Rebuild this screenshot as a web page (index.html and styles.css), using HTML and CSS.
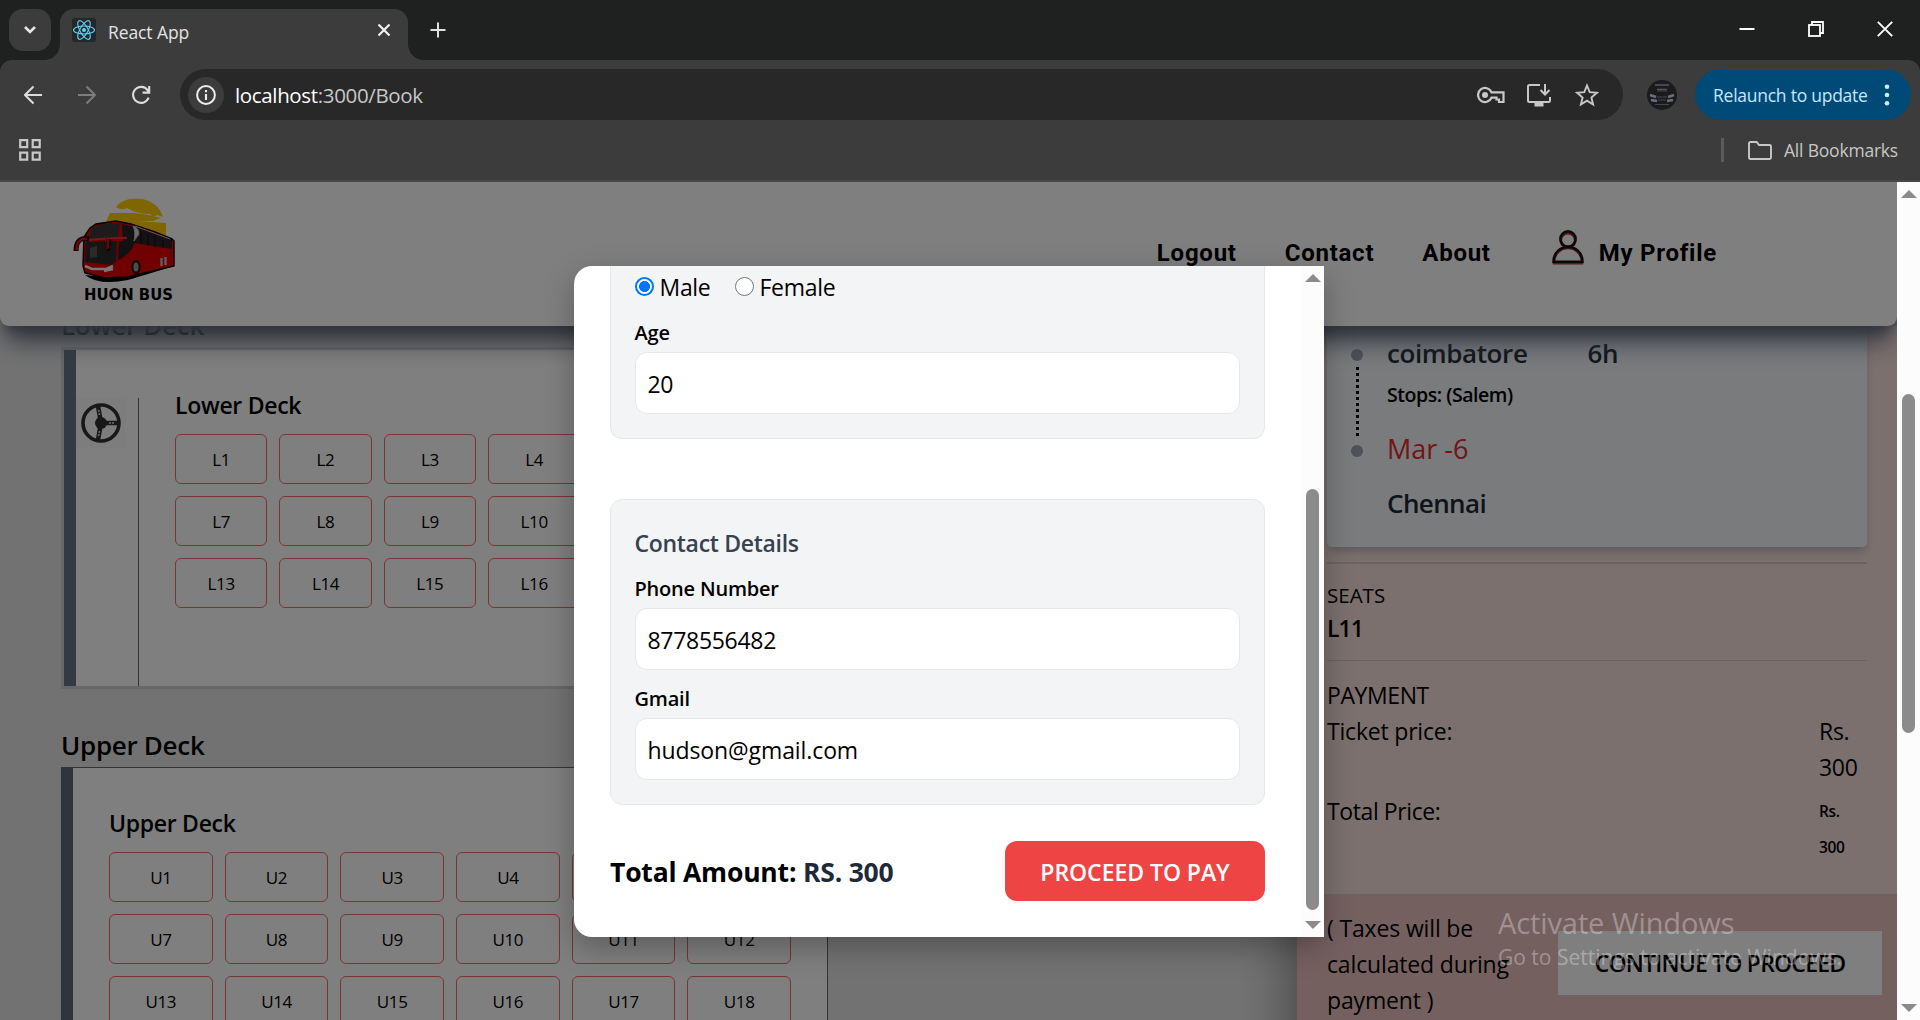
FILE: index.html
```html
<!DOCTYPE html>
<html lang="en">
<head>
<meta charset="utf-8">
<title>React App</title>
<link rel="stylesheet" href="styles.css">
</head>
<body>
<div class="tabstrip">
  <div class="tab-menu"><svg width="14" height="10" viewBox="0 0 14 10"><path d="M2 2l5 5 5-5" fill="none" stroke="#e6e6e6" stroke-width="2.6"/></svg></div>
  <div class="tab">
    <svg class="favicon" width="24" height="24" viewBox="0 0 24 24"><rect width="24" height="24" rx="3" fill="#23272b"/><g fill="none" stroke="#5fd3f3" stroke-width="1.1"><ellipse cx="12" cy="12" rx="10.5" ry="4"/><ellipse cx="12" cy="12" rx="10.5" ry="4" transform="rotate(60 12 12)"/><ellipse cx="12" cy="12" rx="10.5" ry="4" transform="rotate(120 12 12)"/></g><circle cx="12" cy="12" r="2" fill="#5fd3f3"/></svg>
    <span class="tab-title">React App</span>
    <svg width="14" height="14" viewBox="0 0 14 14"><path d="M1.5 1.5l11 11M12.5 1.5l-11 11" stroke="#f0f0f0" stroke-width="2.2"/></svg>
  </div>
  <svg class="new-tab" width="16" height="16" viewBox="0 0 16 16"><path d="M8 .5v15M.5 8h15" stroke="#e0e0e0" stroke-width="2"/></svg>
  <div class="window-buttons">
    <svg width="16" height="16" viewBox="0 0 16 16"><path d="M.5 8h15" stroke="#fff" stroke-width="2"/></svg>
    <svg width="16" height="16" viewBox="0 0 16 16" fill="none" stroke="#fff" stroke-width="1.8"><rect x="1" y="4" width="11" height="11"/><path d="M4 4V1h11v11h-3"/></svg>
    <svg width="16" height="16" viewBox="0 0 16 16"><path d="M.8.8l14.4 14.4M15.2.8L.8 15.2" stroke="#fff" stroke-width="1.9"/></svg>
  </div>
</div>
<div class="toolbar">
  <div class="nav-row">
    <svg class="back" width="20" height="20" viewBox="0 0 20 20" fill="none" stroke="#dcdcdc" stroke-width="2"><path d="M18 10H2M9.5 1.5L1 10l8.5 8.5"/></svg>
    <svg class="forward" width="20" height="20" viewBox="0 0 20 20" fill="none" stroke="#7d7d7d" stroke-width="2"><path d="M1 10h16M9.5 1.5L18 10l-8.5 8.5"/></svg>
    <svg class="reload" width="20" height="20" viewBox="0 0 20 20" fill="none" stroke="#dcdcdc" stroke-width="2.1"><path d="M17.6 12.6a8 8 0 1 1-1-7.4L18 7M18.2 1v6.6h-6.6"/></svg>
    <div class="omnibox">
      <div class="site-info"><svg width="20" height="20" viewBox="0 0 20 20"><circle cx="10" cy="10" r="8.9" fill="none" stroke="#ececec" stroke-width="2"/><path d="M10 9v6M10 5v2.2" stroke="#ececec" stroke-width="2.1"/></svg></div>
      <span class="url">localhost<i>:3000/Book</i></span>
      <svg width="28" height="18" viewBox="0 0 28 18" fill="none" stroke="#c8c8c8" stroke-width="2.200"><path d="M14.500 6.300A7 7 0 1 0 14.500 11.700H19.500V13.500H22V16H26.500V6.300z"/><circle cx="8" cy="9" r="3" fill="#c8c8c8" stroke="none"/></svg>
      <svg class="install" width="26" height="24" viewBox="0 0 26 24" fill="none" stroke="#c8c8c8" stroke-width="2"><path d="M14 2H3.500Q2 2 2 3.500v14Q2 19 3.500 19h19q1.500 0 1.500-1.500V14M19 1v10M14.500 7l4.500 4.500L23.500 7"/><path d="M8.500 21.500h9" stroke-width="4"/></svg>
      <svg width="24" height="24" viewBox="0 0 24 24" fill="none" stroke="#c8c8c8" stroke-width="1.900"><path d="M12 2.500l2.700 6.700 7.200.6-5.500 4.700 1.700 7-6.100-3.800-6.100 3.800 1.700-7L2.100 9.800l7.200-.6z"/></svg>
    </div>
    <svg class="avatar" width="30" height="30" viewBox="0 0 30 30"><circle cx="15" cy="15" r="15" fill="#1b1b1d"/><path d="M8 5h14M10 9.500h10" stroke="#55585e" stroke-width="1.500"/><path d="M3 15l6 2M27 15l-6 2M4 20l6 1M26 20l-6 1" stroke="#69707c" stroke-width="2.500"/><path d="M10 11h10M10 17h10M11 20h8M8 24.500h14" stroke="#44474c" stroke-width="1.200"/></svg>
    <div class="relaunch">Relaunch to update<svg width="6" height="22" viewBox="0 0 6 22" fill="#cdeaff"><circle cx="3" cy="2.700" r="2.300"/><circle cx="3" cy="11" r="2.300"/><circle cx="3" cy="19.300" r="2.300"/></svg></div>
  </div>
  <div class="bookmark-row">
    <svg width="22" height="22" viewBox="0 0 22 22" fill="none" stroke="#c8c8c8" stroke-width="2.200"><path d="M1.200 1.200h7v7h-7zM13.700 1.200h7v7h-7zM1.200 13.700h7v7h-7zM13.700 13.700h7v7h-7z"/></svg>
    <div class="all-bookmarks"><b></b><svg width="24" height="19" viewBox="0 0 24 19" fill="none" stroke="#c8c8c8" stroke-width="1.900"><path d="M1 2.500Q1 1 2.500 1h6.200L11 4h10.500Q23 4 23 5.500v11q0 1.500-1.500 1.500h-19Q1 18 1 16.500z"/></svg><span>All Bookmarks</span></div>
  </div>
</div>
<div class="window">
  <div class="page">
    <header class="site-header">
      <svg class="logo" width="104" height="108" viewBox="0 0 104 108">
        <path d="M43 11C52-2 84-1 90 21L84 19Q80 22 77 18Q64 18 54 12Q49 15 43 11M37 17H61Q74 18 88 22L80 25H65L93 27V42H56L33 26z" fill="#ffcc00"/>
        <path d="M12 79L40 82 101 68 98 71 55 84Q26 90 12 79z" fill="#000"/>
        <path d="M11 41L17 32 23 28 43 25 58 28 82 36 99 43 101 45V70L54 81 32 82 12 77 10 70z" fill="#e00005" stroke="#140000" stroke-width="1.500"/>
        <path d="M20 31Q24 28 47 27L45 42 15 43z" fill="#393939"/>
        <path d="M13 46L44 45 43 65 39 69 12 66z" fill="#2b2b2b"/>
        <path d="M49 28L61 31 63 45Q56 60 45 64L46 45H50z" fill="#222"/>
        <path d="M60 30L99 44V53L61 47z" fill="#302226"/>
        <path d="M60 30Q66 32 66 38L61 45Q63 36 60 30M62 30L97 43" fill="#ddd" stroke="#bbb" stroke-width="1"/>
        <path d="M68 35v13M75 38v12M82 40v11M90 43v9" stroke="#111" stroke-width="1"/>
        <path d="M13 44L43 42H54" stroke="#ee3030" stroke-width="2"/>
        <path d="M16 43Q3 40 3 55M36 43Q35 53 34 54" fill="none" stroke="#1b0000" stroke-width="5"/>
        <path d="M14 43Q4 41 3.500 54M35 43Q35 50 34 53" fill="none" stroke="#cc1010" stroke-width="2.600"/>
        <path d="M12 70L19 73H33L40 70M31 75l9-2" fill="none" stroke="#eee" stroke-width="2.500"/>
        <path d="M17 52L24 50V61L17 62z" fill="#555"/>
        <ellipse cx="63" cy="71" rx="4.600" ry="7" fill="#181818"/><ellipse cx="63" cy="71" rx="2.500" ry="4.500" fill="#999"/>
        <path d="M88.500 62v8M92.500 61v8" stroke="#bbb" stroke-width="2.400"/>
        <text x="11" y="103.500" class="logo-text" textLength="89" lengthAdjust="spacingAndGlyphs">HUON BUS</text>
      </svg>
      <nav class="site-nav">
        <span class="n1">Logout</span><span class="n2">Contact</span><span class="n3">About</span>
        <svg width="32" height="35" viewBox="0 0 32 35" fill="none"><g stroke="#b83036" stroke-width="2.500"><circle cx="16" cy="10.500" r="7.200"/><path d="M2 33.300C2 13 30 13 30 33.300z"/></g><g stroke="#151515" stroke-width="2.600"><circle cx="16" cy="9" r="7.600"/><path d="M1.500 31.700C2 12 30 12 30.500 31.700z"/></g></svg>
        <span class="n4">My Profile</span>
      </nav>
    </header>
    <div class="columns">
      <main class="decks">
        <h2 class="deck-title first">Lower Deck</h2>
        <section class="deck lower">
          <div class="driver"><svg width="50" height="50" viewBox="0 0 50 50"><rect width="50" height="50" fill="#fafafa"/><circle cx="25" cy="25" r="18" fill="none" stroke="#303030" stroke-width="3.600"/><circle cx="25" cy="25" r="6" fill="#303030"/><path d="M25 25L22 8M25 25L22 42M25 25H42" stroke="#303030" stroke-width="4.500"/><path d="M23.500 17l-1-6M23.500 33l-1 6M33 25h6" stroke="#ddd" stroke-width="1.500" stroke-dasharray="2 1"/></svg></div>
          <div class="deck-body">
            <h3>Lower Deck</h3>
            <div class="seats"><span>L1</span><span>L2</span><span>L3</span><span>L4</span><span>L5</span><span>L6</span><span>L7</span><span>L8</span><span>L9</span><span>L10</span><span>L11</span><span>L12</span><span>L13</span><span>L14</span><span>L15</span><span>L16</span><span>L17</span><span>L18</span></div>
          </div>
        </section>
        <h2 class="deck-title">Upper Deck</h2>
        <section class="deck upper">
          <div class="deck-body">
            <h3>Upper Deck</h3>
            <div class="seats"><span>U1</span><span>U2</span><span>U3</span><span>U4</span><span>U5</span><span>U6</span><span>U7</span><span>U8</span><span>U9</span><span>U10</span><span>U11</span><span>U12</span><span>U13</span><span>U14</span><span>U15</span><span>U16</span><span>U17</span><span>U18</span></div>
          </div>
        </section>
      </main>
      <aside class="summary">
        <div class="trip">
          <div class="timeline"><i></i><b></b><i></i></div>
          <div class="stops">
            <p class="city"><span>coimbatore</span><span>6h</span></p>
            <p class="via">Stops: (Salem)</p>
            <p class="date">Mar -6</p>
            <p class="city dest">Chennai</p>
          </div>
        </div>
        <div class="seat-info"><p class="label">SEATS</p><p class="seat-no">L11</p></div>
        <div class="payment">
          <p class="pay-title">PAYMENT</p>
          <div class="pay-row"><span class="tp">Ticket price:</span><span class="amount">Rs.<br>300</span></div>
          <div class="pay-row total"><span>Total Price:</span><span class="amount small">Rs.<br>300</span></div>
        </div>
        <div class="checkout"><p>( Taxes will be<br>calculated during<br>payment )</p><button>CONTINUE TO PROCEED</button></div>
      </aside>
    </div>
    <div class="overlay"></div>
    <div class="modal">
      <div class="modal-content">
        <div class="card passenger">
          <div class="genders"><i class="radio on"></i><span class="male">Male</span><i class="radio"></i><span class="female">Female</span></div>
          <label>Age</label>
          <div class="field">20</div>
        </div>
        <div class="card contact">
          <h3>Contact Details</h3>
          <label class="phone">Phone Number</label>
          <div class="field">8778556482</div>
          <label>Gmail</label>
          <div class="field mail">hudson@gmail.com</div>
        </div>
        <div class="pay-bar"><strong>Total Amount: <em>RS. 300</em></strong><button>PROCEED TO PAY</button></div>
      </div>
      <div class="scroll modal-scroll"><i class="up"></i><b></b><i class="down"></i></div>
    </div>
    <div class="watermark"><p>Activate Windows</p><small>Go to Settings to activate Windows.</small></div>
  </div>
  <div class="scroll page-scroll"><i class="up"></i><b></b><i class="down"></i></div>
</div>
</body>
</html>
```
FILE: styles.css
```css
* { box-sizing: border-box; margin: 0; padding: 0; }
body { width: 1920px; height: 1020px; overflow: hidden; display: flex; flex-direction: column; font-family: "Open Sans", "Noto Sans", sans-serif; font-size: 23px; line-height: 36px; letter-spacing: -0.3px; color: #000; background: #1f2120; }
svg { display: block; flex: none; }
i, em { font-style: normal; }
button { border: 0; font: inherit; letter-spacing: inherit; }
span, p, h2, h3, label, strong, small { white-space: nowrap; }

/* Browser frame */
.tabstrip { height: 60px; display: flex; background: #1f2120; padding-left: 9px; }
.tab-menu { width: 42px; height: 42px; margin-top: 9px; border-radius: 14px; background: #3c3c3c; display: flex; align-items: center; justify-content: center; }
.tab { position: relative; width: 348px; height: 51px; margin: 9px 0 0 9px; padding: 0 17px 9px 12px; border-radius: 14px 14px 0 0; background: #3c3c3c; display: flex; align-items: center; }
.tab::before, .tab::after { content: ""; position: absolute; bottom: 0; width: 15px; height: 15px; }
.tab::before { left: -15px; background: radial-gradient(circle at 0 0, transparent 14.5px, #3c3c3c 15px); }
.tab::after { right: -15px; background: radial-gradient(circle at 100% 0, transparent 14.5px, #3c3c3c 15px); }
.tab-title { flex: 1; margin-left: 12px; padding-top: 3px; font-size: 17.5px; color: #e3e3e3; letter-spacing: -.1px; }
.new-tab { margin: 22px 0 0 22px; }
.window-buttons { margin: 21px 27px 0 auto; display: flex; gap: 53px; }
.toolbar { height: 122px; background: #3c3c3c; border-bottom: 2px solid #474747; border-radius: 12px 12px 0 0; }
.nav-row { height: 69px; padding: 0 9px 0 24px; display: flex; align-items: center; }
.forward { margin-left: 33px; }
.reload { margin-left: 34px; }
.omnibox { width: 1443px; height: 51px; margin-left: 29px; padding: 0 24px 0 8px; border-radius: 26px; background: #282828; display: flex; align-items: center; }
.site-info { width: 36px; height: 36px; border-radius: 50%; background: #3c3c3c; display: flex; align-items: center; justify-content: center; }
.url { flex: 1; margin-left: 11px; font-size: 20.5px; color: #fff; letter-spacing: -.35px; }
.url i { color: #c7c7c7; }
.install { margin: 0 23px 0 21px; }
.avatar { margin-left: 24px; }
.relaunch { width: 216px; height: 51px; margin-left: 18px; padding: 0 21px 0 18px; border-radius: 26px; background: #004a77; color: #c2e7ff; font-size: 17.5px; letter-spacing: -.25px; display: flex; align-items: center; justify-content: space-between; }
.bookmark-row { height: 42px; padding: 0 22px 0 19px; display: flex; justify-content: space-between; align-items: center; }
.all-bookmarks { display: flex; align-items: center; font-size: 17.5px; color: #c7c7c7; letter-spacing: -.2px; }
.all-bookmarks b { width: 3px; height: 24px; background: #5c5c5c; margin-right: 24px; }
.all-bookmarks span { margin-left: 12px; }

/* Page frame */
.window { height: 838px; display: flex; }
.page { position: relative; width: 1897px; height: 838px; overflow: hidden; background: #e5e5e5; }
.scroll { width: 23px; background: #fcfcfc; display: flex; flex-direction: column; align-items: center; padding: 8px 0; }
.scroll .up { border: 8px solid transparent; border-top: 0; border-bottom-color: #8b8b8b; }
.scroll .down { border: 8px solid transparent; border-bottom: 0; border-top-color: #8b8b8b; margin-top: auto; }
.scroll b { width: 13px; border-radius: 7px; background: #8b8b8b; }
.page-scroll b { height: 339px; margin-top: 196px; }
.modal-scroll b { height: 421px; margin-top: 207px; }

/* Site header */
.site-header { position: relative; z-index: 2; height: 144px; background: #fff; border-radius: 0 0 9px 9px; box-shadow: 0 22px 26px -7px #606878, 0 9px 14px -6px #606878; display: flex; justify-content: space-between; padding: 14px 180px 0 73px; }
.logo-text { font: 700 15px "DejaVu Sans", sans-serif; letter-spacing: 0; }
.site-nav { display: flex; margin-top: 39px; font: 700 24px/36px Roboto, sans-serif; letter-spacing: .75px; }
.site-nav svg { margin: -5px 15px 0 61px; }
.n1, .n2 { margin-right: 48px; }
.columns { display: grid; grid-template-columns: 1297px 600px; height: 694px; }

/* Decks */
.decks { padding-left: 61px; }
.deck-title { font-size: 26px; font-weight: 600; }
.deck-title.first { margin-top: -19px; }
.deck { width: 767px; display: flex; }
.deck h3 { font-size: 23px; font-weight: 600; }
.lower { height: 342px; margin: 4px 0 38px; border: 3px solid #ccced3; background: linear-gradient(90deg, #6b7585 12px, #fff 12px); }
.driver { width: 63px; margin: 48px 0 0 12px; border-right: 1px solid #606468; }
.deck-body { flex: 1; padding: 38px 36px 0; }
.lower .deck-body { padding: 37px 36px 0 36px; }
.upper h3 { line-height: 35px; height: 36px; }
.seats { display: grid; grid-template-columns: repeat(6, 1fr); gap: 12px; margin-top: 10px; font-size: 17px; letter-spacing: -.4px; }
.lower .seats { margin-top: 11px; }
.seats span { height: 50px; border: 1px solid #ef6b6b; border-radius: 6px; line-height: 49px; text-align: center; }
.upper { height: 420px; margin-top: 4px; border: solid #606b78; border-width: 1px 1px 0 12px; background: #fff; }

/* Booking summary */
.summary { background: #f6e1dd; box-shadow: 0 0 50px 6px rgba(0,0,0,.4); }
.trip { height: 221px; margin: 0 30px 15px; padding: 9px 0 0 24px; background: #f3f6f9; border-radius: 0 0 5px 5px; box-shadow: 0 6px 10px -2px rgba(80,90,110,.35); display: flex; }
.timeline { width: 12px; margin-right: 24px; padding-top: 14px; display: flex; flex-direction: column; align-items: center; gap: 6px; }
.timeline i { width: 12px; height: 12px; border-radius: 50%; background: #9ca3af; }
.timeline b { width: 3px; height: 72px; background: repeating-linear-gradient(#000 0 3px, transparent 3px 6px); }
.city { font-size: 26px; font-weight: 600; letter-spacing: -.4px; color: #1f2937; display: flex; gap: 60px; }
.via { margin-top: 9px; font-size: 19.500px; font-weight: 600; line-height: 30px; letter-spacing: -.45px; }
.date { margin-top: 21px; font-size: 27px; letter-spacing: 0; color: #e32a2e; }
.dest { margin-top: 18px; letter-spacing: -.6px; }
.seat-info { height: 99px; margin: 0 30px; padding-top: 16px; border-top: 2px solid #dfc2bf; border-bottom: 1px solid #dfc6c2; }
.label { font-size: 20.500px; line-height: 30px; font-weight: 500; letter-spacing: 0; }
.seat-no { font-weight: 600; letter-spacing: -1px; }
.payment { height: 233px; padding: 16px 0 0 30px; }
.pay-title { letter-spacing: -.4px; }
.pay-row { height: 80px; display: flex; justify-content: space-between; }
.tp { letter-spacing: -.2px; }
.total { letter-spacing: -.4px; }
.amount { width: 78px; }
.small { font-size: 15.500px; font-weight: 600; }
.checkout { height: 126px; padding: 16px 15px 0 30px; background: #ebc0c0; display: flex; justify-content: space-between; letter-spacing: -.15px; }
.checkout button { width: 324px; height: 64px; margin-top: 21px; background: #fff; font-weight: 600; letter-spacing: -.8px; }

/* Passenger dialog */
.overlay { position: absolute; inset: 0; z-index: 3; background: rgba(0,0,0,.5); }
.modal { position: absolute; z-index: 4; left: 574px; top: 84px; width: 750px; height: 671px; border-radius: 18px 0 0 18px; background: #fff; box-shadow: 0 10px 30px rgba(0,0,0,.28); display: flex; overflow: hidden; }
.modal-content { flex: 1; padding: 0 36px; }
.card { background: #f3f4f6; border: 1px solid #e5e7eb; border-radius: 12px; padding: 25px 24px 24px 23.500px; }
.passenger { height: 173px; padding-top: 3px; border-top: 0; border-radius: 0 0 12px 12px; }
.genders { display: flex; align-items: center; height: 36px; margin-bottom: 12px; }
.radio { width: 19px; height: 19px; margin-top: -2px; border: 1.500px solid #767676; border-radius: 50%; background: #fff; margin-right: 6px; }
.radio.on { border: 2px solid #0075ff; background: radial-gradient(circle, #0075ff 5.200px, #fff 5.800px); }
.male { margin-right: 24px; }
label { display: block; height: 30px; margin-bottom: 5px; font-size: 20px; line-height: 32px; font-weight: 600; letter-spacing: -.2px; }
.field { height: 62px; padding: 0 12px; border: 1px solid #e5e7eb; border-radius: 12px; background: #fff; line-height: 62px; }
.mail { letter-spacing: -.1px; }
.field + label { margin-top: 13px; }
.contact { height: 306px; margin-top: 60px; }
.contact h3 { height: 36px; margin-bottom: 12px; font-size: 23px; line-height: 37px; font-weight: 600; color: #374151; }
.pay-bar { margin-top: 36px; height: 60px; display: flex; justify-content: space-between; align-items: center; }
.pay-bar strong { padding-top: 2px; font-size: 26.500px; font-weight: 700; letter-spacing: -.2px; }
.pay-bar em { color: #1f2937; }
.pay-bar button { width: 260px; height: 60px; padding-top: 2px; border-radius: 12px; background: #ef4444; color: #fff; font-weight: 600; letter-spacing: -.05px; }

/* Operating system notice */
.watermark { position: absolute; z-index: 5; left: 1498px; top: 723px; color: rgba(255,255,255,.32); }
.watermark p { font-size: 29px; line-height: 36px; letter-spacing: -.1px; }
.watermark small { display: block; font-size: 21px; line-height: 32px; letter-spacing: 0; }
```
